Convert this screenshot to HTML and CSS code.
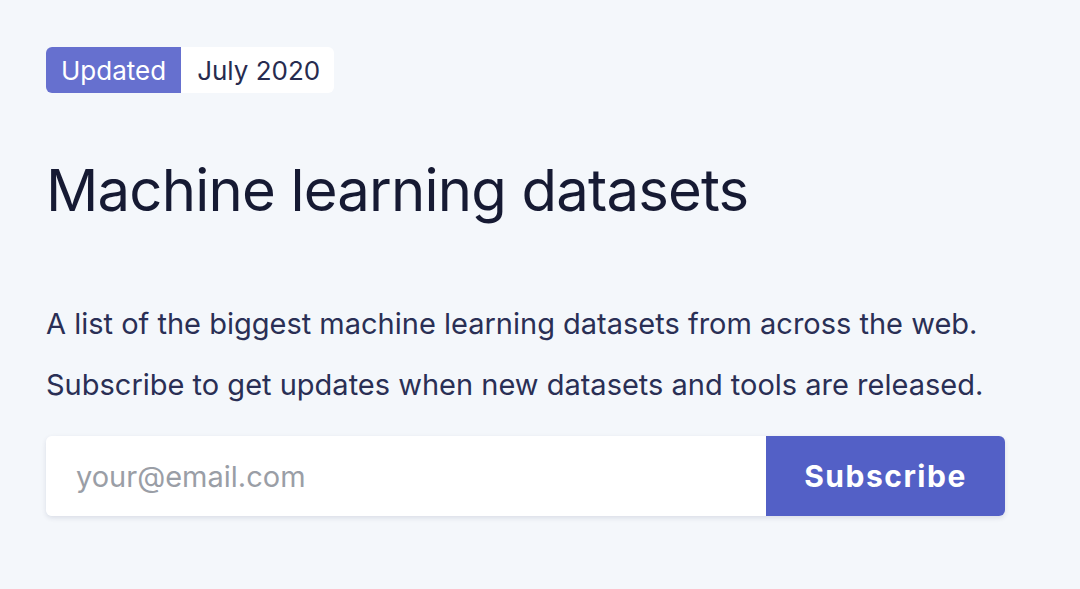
FILE: index.html
```html
<!DOCTYPE html>
<html>
<head>
<meta charset="utf-8">
<link rel="stylesheet" href="styles.css">
</head>
<body>
<main class="hero">
  <div class="badge"><span class="badge-label">Updated</span><span class="badge-date">July 2020</span></div>
  <h1 class="title">Machine learning datasets</h1>
  <p class="lead">A list of the biggest machine learning datasets from across the web.</p>
  <p class="lead">Subscribe to get updates when new datasets and tools are released.</p>
  <form class="signup">
    <input class="email" type="email" placeholder="your@email.com">
    <button class="btn" type="button">Subscribe</button>
  </form>
</main>
</body>
</html>
```
FILE: styles.css
```css
html, body { margin: 0; padding: 0; }
body {
  background: #f4f7fb;
  font-family: Inter, "Noto Sans", sans-serif;
  color: #2a2f55;
  width: 1080px;
  height: 589px;
  overflow: hidden;
}
.hero {
  padding: 47px 46px 0 46px;
  display: flex;
  flex-direction: column;
  align-items: flex-start;
}
.badge {
  display: inline-flex;
  height: 46px;
  border-radius: 6px;
  overflow: hidden;
  background: #fff;
  font-size: 26px;
}
.badge-label {
  display: flex;
  align-items: center;
  background: #6670cf;
  color: #fff;
  padding: 0 15px;
}
.badge-date {
  display: flex;
  align-items: center;
  color: #272b4f;
  padding: 0 14px 0 16px;
}
.title {
  margin: 65px 0 0 0;
  font-size: 58px;
  font-weight: 400;
  color: #161a33;
  line-height: 64px;
  letter-spacing: -0.8px;
}
.lead {
  margin: 0;
  font-size: 29px;
  line-height: 61px;
  color: #2a2f55;
}
.title + .lead { margin-top: 71px; }
.signup {
  margin-top: 21px;
  display: flex;
  width: 959px;
  height: 80px;
  border-radius: 6px;
  overflow: hidden;
  box-shadow: 0 2px 5px rgba(30, 40, 80, 0.12);
}
.email {
  flex: 1;
  border: 0;
  outline: 0;
  background: #fff;
  padding: 0 30px;
  font-family: inherit;
  font-size: 29px;
  color: #333;
}
.email::placeholder { color: #9a9ea6; }
.btn {
  width: 239px;
  border: 0;
  background: #5360c6;
  color: #fff;
  font-family: inherit;
  font-size: 30px;
  font-weight: 700;
  letter-spacing: 1.5px;
}
```
